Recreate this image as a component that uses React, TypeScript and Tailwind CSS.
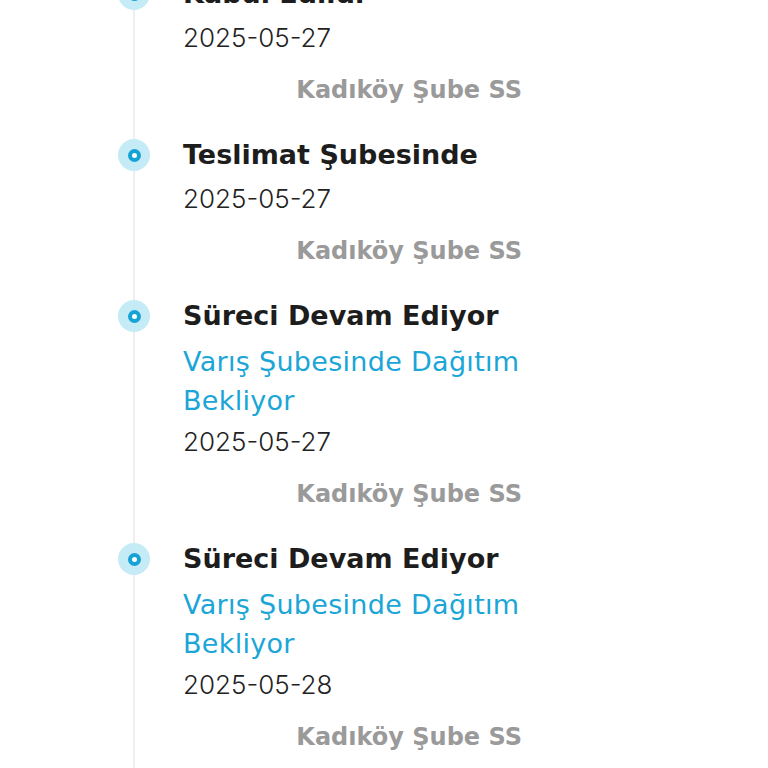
import React from "react";

type Item = {
  title: string;
  sub?: string;
  date: string;
  loc: string;
};

const items: Item[] = [
  { title: "Kabul Edildi", date: "2025-05-27", loc: "Kadıköy Şube SS" },
  { title: "Teslimat Şubesinde", date: "2025-05-27", loc: "Kadıköy Şube SS" },
  {
    title: "Süreci Devam Ediyor",
    sub: "Varış Şubesinde Dağıtım Bekliyor",
    date: "2025-05-27",
    loc: "Kadıköy Şube SS",
  },
  {
    title: "Süreci Devam Ediyor",
    sub: "Varış Şubesinde Dağıtım Bekliyor",
    date: "2025-05-28",
    loc: "Kadıköy Şube SS",
  },
];

function Dot() {
  return (
    <div className="w-[32px] h-[32px] rounded-full bg-[#c4ebf6] flex items-center justify-center shrink-0">
      <div className="w-[13px] h-[13px] rounded-full border-[4px] border-[#15a3d6] bg-white" />
    </div>
  );
}

export default function App() {
  return (
    <div className="w-[768px] h-[768px] overflow-hidden bg-white">
      <div className="mt-[-28px] pl-[118px]">
        {items.map((it, i) => (
          <div key={i} className="flex">
            <div className="w-[32px] flex flex-col items-center shrink-0">
              <div className="w-[2px] h-[6px] bg-[#efefef]" />
              <Dot />
              <div className="w-[2px] flex-1 bg-[#efefef]" />
            </div>
            <div className="ml-[33px] w-[339px] pb-[13px]">
              <div className="font-['DejaVu_Sans',sans-serif] text-[27px] leading-[44px] font-bold text-[#1d1d1d] whitespace-nowrap">
                {it.title}
              </div>
              {it.sub && (
                <div className="mt-[4px] font-['DejaVu_Sans',sans-serif] text-[27px] leading-[39px] font-normal tracking-[0.3px] text-[#1ba6d7]">
                  {it.sub}
                </div>
              )}
              <div className="font-['Inter',sans-serif] text-[26px] leading-[44px] font-light text-[#222222]">
                {it.date}
              </div>
              <div className="font-['DejaVu_Sans',sans-serif] text-[24px] leading-[60px] font-bold text-[#9a9a9a] text-right whitespace-nowrap">
                {it.loc}
              </div>
            </div>
          </div>
        ))}
      </div>
    </div>
  );
}
